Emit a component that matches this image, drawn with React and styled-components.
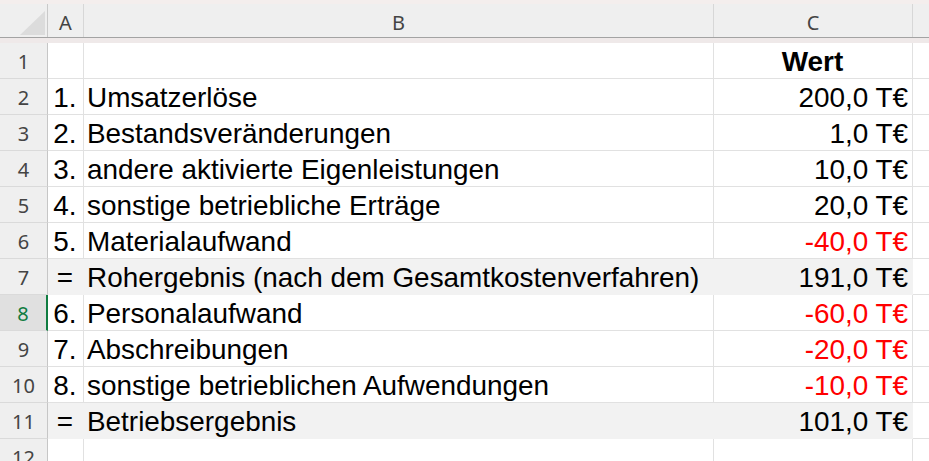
import React from "react";
import styled, { createGlobalStyle } from "styled-components";

const GlobalStyle = createGlobalStyle`
  html, body {
    margin: 0;
    padding: 0;
    background: #ffffff;
    overflow: hidden;
  }
`;

const columns = "48px 36px 630px 199px 1fr";

const Sheet = styled.div`
  display: flex;
  flex-direction: column;
  width: 929px;
  height: 461px;
  overflow: hidden;
  background: #ffffff;
`;

const TopStrip = styled.div`
  height: 4px;
  flex: none;
  background: #f4eeed;
`;

const HeaderRow = styled.div`
  display: grid;
  grid-template-columns: ${columns};
  height: 34px;
  flex: none;
  box-sizing: border-box;
  background: #efefef;
  border-bottom: 1px solid #a3a3a3;
`;

const Corner = styled.div`
  display: flex;
  align-items: flex-end;
  justify-content: flex-end;
  padding: 0 2px 2px 0;
  border-right: 1px solid #c9c9c9;
`;

const CornerTriangle = styled.div`
  width: 25px;
  height: 24px;
  background: #dcdcdc;
  clip-path: polygon(100% 0, 100% 100%, 0 100%);
`;

const ColHeader = styled.div`
  display: flex;
  align-items: center;
  justify-content: center;
  padding-top: 3px;
  border-right: ${(p) => (p.$last ? "none" : "1px solid #d7d7d7")};
  font-family: "Noto Sans", "Liberation Sans", sans-serif;
  font-size: 20px;
  color: #444444;
`;

const FreezeStrip = styled.div`
  height: 5px;
  flex: none;
  background: #efe9e9;
`;

const DataRow = styled.div`
  display: grid;
  grid-template-columns: ${columns};
  height: 36px;
  flex: none;
`;

const RowNumber = styled.div`
  display: flex;
  align-items: flex-end;
  justify-content: center;
  box-sizing: border-box;
  padding-bottom: 2px;
  background: ${(p) => (p.$selected ? "#e0e0e0" : "#efefef")};
  border-right: ${(p) =>
    p.$selected ? "2px solid #107c41" : "1px solid #c6c6c6"};
  border-bottom: 1px solid #dadada;
  font-family: "Noto Sans", "Liberation Sans", sans-serif;
  font-size: 20px;
  line-height: 28px;
  color: ${(p) => (p.$selected ? "#107c41" : "#444444")};
`;

const Cell = styled.div`
  display: flex;
  align-items: flex-end;
  justify-content: ${(p) => p.$align || "flex-start"};
  box-sizing: border-box;
  padding: 0 4px 0 3px;
  white-space: nowrap;
  background: ${(p) => (p.$filled ? "#f2f2f2" : "#ffffff")};
  border-right: 1px solid ${(p) => (p.$filled ? "#f2f2f2" : "#e1e1e1")};
  border-bottom: 1px solid ${(p) => (p.$filled ? "#f2f2f2" : "#e1e1e1")};
  font-family: "Liberation Sans", Arial, sans-serif;
  font-size: 27.9px;
  line-height: 32px;
  font-weight: ${(p) => (p.$bold ? 700 : 400)};
  color: ${(p) => (p.$negative ? "#ff0000" : "#000000")};
`;

const EmptyCell = styled.div`
  border-bottom: 1px solid #e1e1e1;
`;

const rows = [
  { a: "", b: "", c: "Wert", bold: true },
  { a: "1.", b: "Umsatzerlöse", c: "200,0 T€" },
  { a: "2.", b: "Bestandsveränderungen", c: "1,0 T€" },
  { a: "3.", b: "andere aktivierte Eigenleistungen", c: "10,0 T€" },
  { a: "4.", b: "sonstige betriebliche Erträge", c: "20,0 T€" },
  { a: "5.", b: "Materialaufwand", c: "-40,0 T€", negative: true },
  {
    a: "=",
    b: "Rohergebnis (nach dem Gesamtkostenverfahren)",
    c: "191,0 T€",
    filled: true,
  },
  { a: "6.", b: "Personalaufwand", c: "-60,0 T€", negative: true },
  { a: "7.", b: "Abschreibungen", c: "-20,0 T€", negative: true },
  {
    a: "8.",
    b: "sonstige betrieblichen Aufwendungen",
    c: "-10,0 T€",
    negative: true,
  },
  { a: "=", b: "Betriebsergebnis", c: "101,0 T€", filled: true },
  { a: "", b: "", c: "" },
];

const SELECTED_ROW = 8;

function App() {
  return (
    <>
      <GlobalStyle />
      <Sheet>
        <TopStrip />
        <HeaderRow>
          <Corner>
            <CornerTriangle />
          </Corner>
          <ColHeader>A</ColHeader>
          <ColHeader>B</ColHeader>
          <ColHeader>C</ColHeader>
          <ColHeader $last />
        </HeaderRow>
        <FreezeStrip />
        {rows.map((row, i) => (
          <DataRow key={i}>
            <RowNumber $selected={i + 1 === SELECTED_ROW}>{i + 1}</RowNumber>
            <Cell $align="center" $filled={row.filled}>
              {row.a}
            </Cell>
            <Cell $filled={row.filled}>{row.b}</Cell>
            <Cell
              $align={row.bold ? "center" : "flex-end"}
              $filled={row.filled}
              $bold={row.bold}
              $negative={row.negative}
            >
              {row.c}
            </Cell>
            <EmptyCell />
          </DataRow>
        ))}
      </Sheet>
    </>
  );
}

export default App;
